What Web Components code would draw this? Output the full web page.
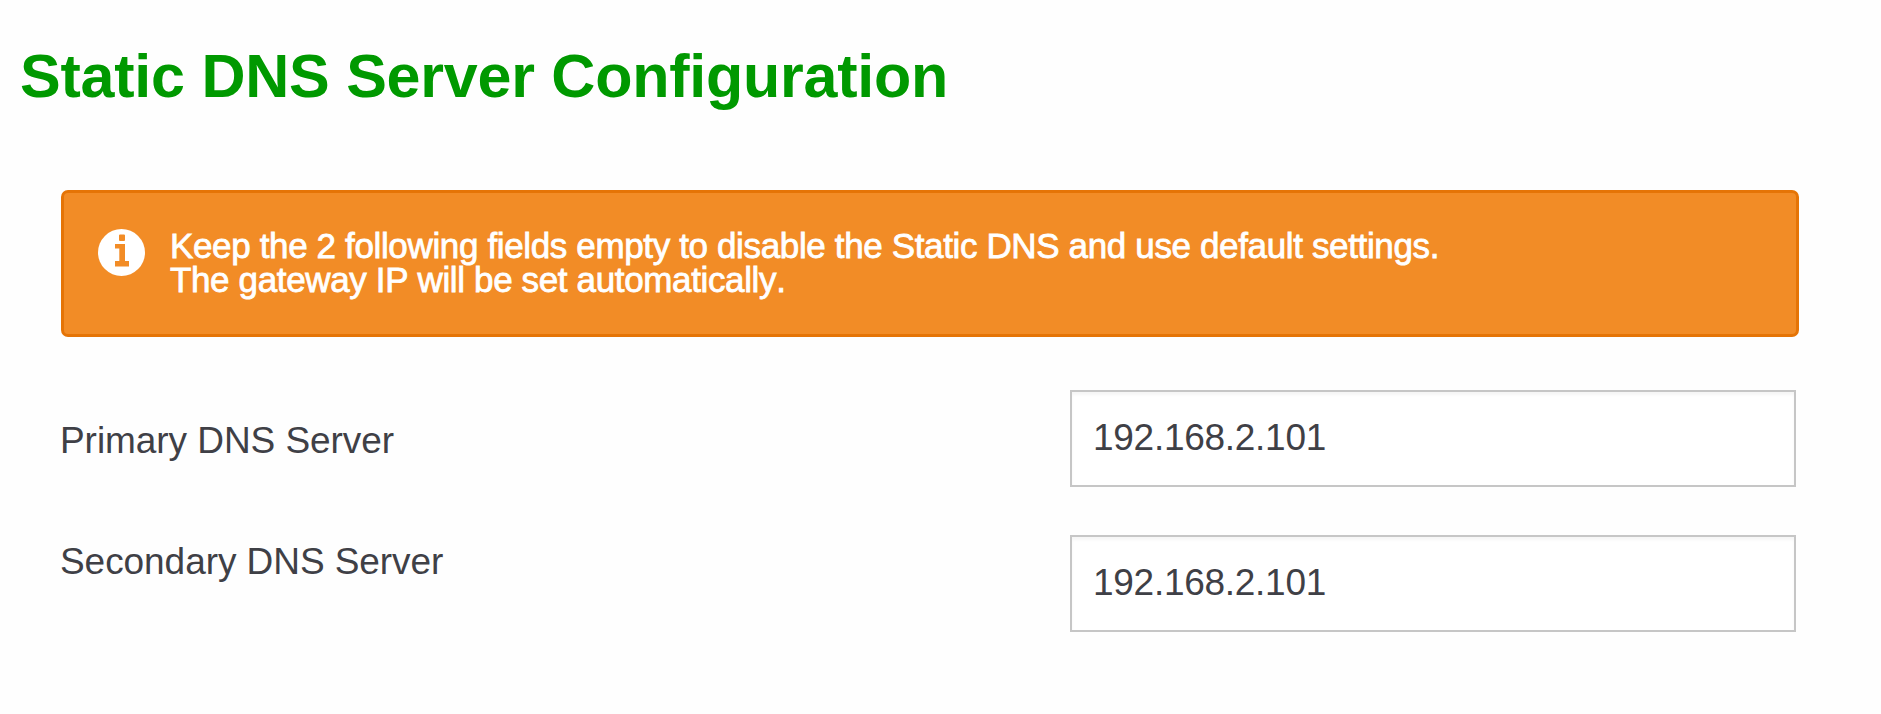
<!DOCTYPE html>
<html lang="en">
<head>
<meta charset="utf-8">
<title>Static DNS Server Configuration</title>
<style>
  body {
    margin: 0;
    background: #fefefe;
    color: #3f4046;
    font-family: "Liberation Sans", Arial, sans-serif;
    font-kerning: none;
  }
</style>
</head>
<body>
<dns-page heading="Static DNS Server Configuration">
  <info-alert>Keep the 2 following fields empty to disable the Static DNS and use default settings.<br>The gateway IP will be set automatically.</info-alert>
  <form-row label="Primary DNS Server" value="192.168.2.101"></form-row>
  <form-row class="secondary" label="Secondary DNS Server" value="192.168.2.101"></form-row>
</dns-page>

<script>
class DnsPage extends HTMLElement {
  constructor() {
    super();
    this.attachShadow({ mode: 'open' });
  }

  connectedCallback() {
    this.shadowRoot.innerHTML = `
      <style>
        :host {
          display: block;
          box-sizing: border-box;
          height: 714px;
          padding: 41px 82px 0 20px;
        }
        h1 {
          margin: 0;
          color: #090;
          font-size: 61px;
          line-height: 70px;
          letter-spacing: -0.24px;
          white-space: nowrap;
        }
        .content {
          display: flex;
          flex-direction: column;
          padding: 79px 0 0 39px;
        }
        ::slotted(info-alert) {
          margin: 0 0 53px 2px;
        }
        ::slotted(form-row) {
          margin: 0 3px 48px 0;
        }
        ::slotted(.secondary) {
          --label-top: 6px;
        }
      </style>
      <h1>${this.getAttribute('heading')}</h1>
      <div class="content"><slot></slot></div>
    `;
  }
}

class InfoAlert extends HTMLElement {
  constructor() {
    super();
    this.attachShadow({ mode: 'open' });
  }

  connectedCallback() {
    this.shadowRoot.innerHTML = `
      <style>
        :host {
          display: flex;
          gap: 25px;
          box-sizing: border-box;
          height: 147px;
          padding: 36px 34px;
          border: 3px solid #e57406;
          border-radius: 7px;
          background: #f28c26;
          color: #fff;
        }
        svg {
          flex: none;
          width: 47px;
          height: 47px;
        }
        p {
          margin: 0;
          font-size: 35px;
          line-height: 34px;
          letter-spacing: -0.36px;
          white-space: nowrap;
          -webkit-text-stroke: 0.8px #fff;
        }
      </style>
      <svg viewBox="0 0 47 47">
        <circle cx="23.5" cy="23.5" r="23.5" fill="#fff"/>
        <path fill="#f28c26" d="M22 5.5h4q1 0 1 1V11q0 1-1 1h-4q-1 0-1-1V6.500q0-1 1-1zM17 15h10v17h4v5.500H17V32h4.300V19.500H17z"/>
      </svg>
      <p><slot></slot></p>
    `;
  }
}

class FormRow extends HTMLElement {
  constructor() {
    super();
    this.attachShadow({ mode: 'open' });
  }

  connectedCallback() {
    this.shadowRoot.innerHTML = `
      <style>
        :host {
          display: flex;
          justify-content: space-between;
          align-items: flex-start;
        }
        label {
          padding: var(--label-top, 30px) 0 0 1px;
          font-size: 37px;
          line-height: 42px;
          letter-spacing: -0.06px;
          white-space: nowrap;
        }
        input {
          box-sizing: border-box;
          width: 726px;
          height: 97px;
          margin: 0;
          padding: 0 21px 2px;
          border: 2px solid #c6c6c6;
          border-radius: 0;
          outline: 0;
          background: #fff;
          box-shadow: inset 0 3px 3px rgba(0, 0, 0, 0.04);
          color: inherit;
          font: inherit;
          font-size: 37px;
          font-kerning: none;
          letter-spacing: -0.28px;
        }
      </style>
      <label for="field">${this.getAttribute('label')}</label>
      <input id="field" type="text" value="${this.getAttribute('value')}">
    `;
  }
}

customElements.define('dns-page', DnsPage);
customElements.define('info-alert', InfoAlert);
customElements.define('form-row', FormRow);
</script>
</body>
</html>
